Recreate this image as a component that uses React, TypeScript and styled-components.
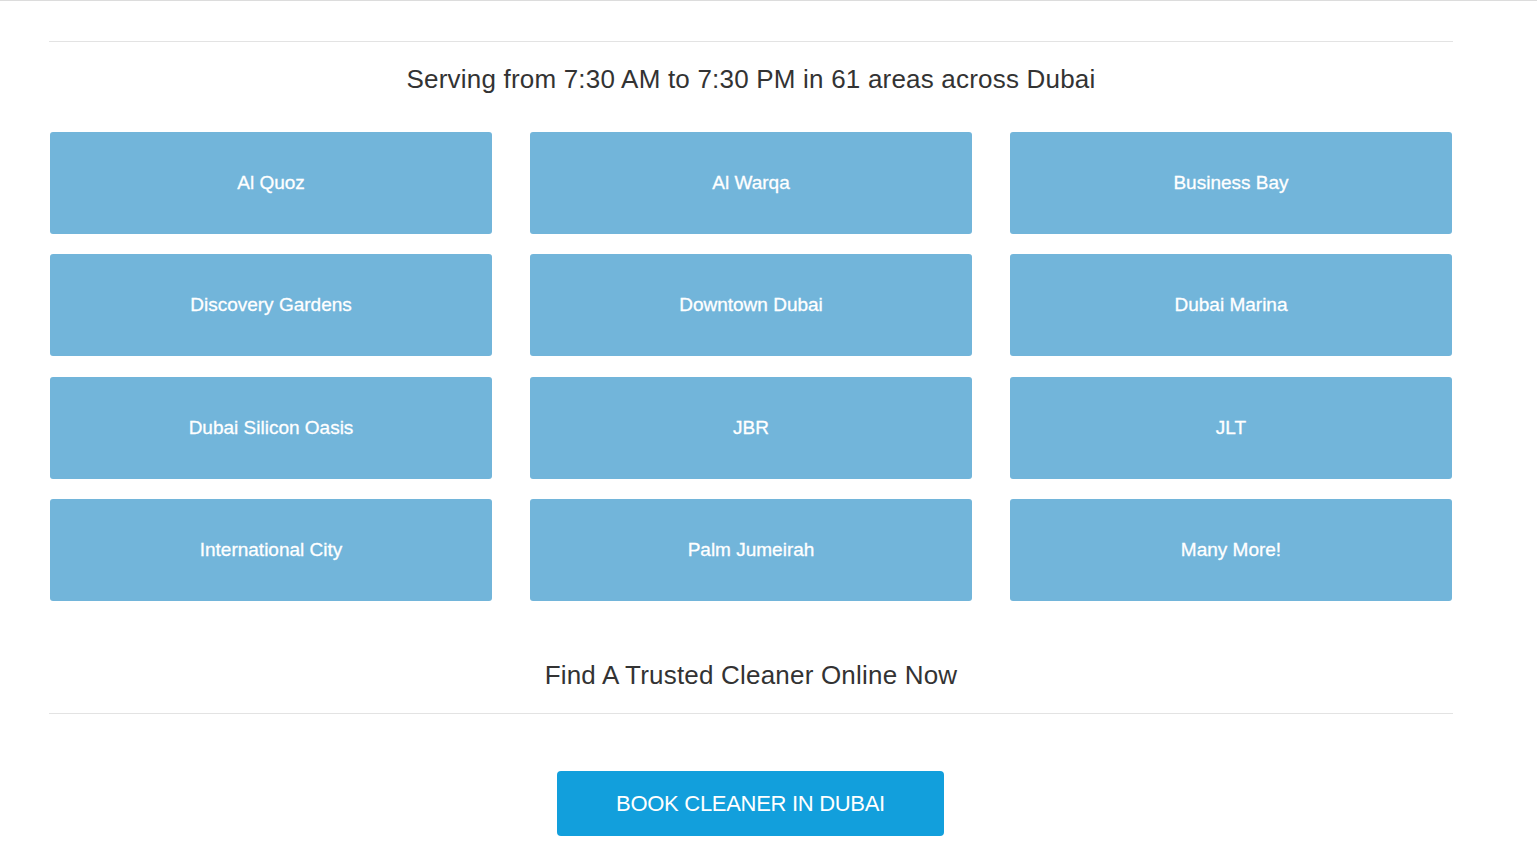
import React from "react";
import styled, { createGlobalStyle } from "styled-components";

const Global = createGlobalStyle`
  html, body { margin: 0; padding: 0; background: #fff; }
  body { font-family: "Liberation Sans", Arial, sans-serif; color: #333; }
`;

const Page = styled.div`
  border-top: 1px solid #dcdcdc;
  padding: 40px 0 0 49px;
`;

const Container = styled.div`
  width: 1404px;
  display: flex;
  flex-direction: column;
  align-items: stretch;
`;

const Rule = styled.hr`
  border: 0;
  border-top: 1px solid #e3e3e3;
  margin: 0;
`;

const Heading = styled.h2<{ $top: number; $bottom: number }>`
  margin: ${(p) => p.$top}px 0 ${(p) => p.$bottom}px;
  font-size: 26px;
  line-height: 30px;
  font-weight: normal;
  letter-spacing: 0.2px;
  text-align: center;
  color: #333;
`;

const Grid = styled.div`
  display: grid;
  grid-template-columns: repeat(3, 442px);
  grid-auto-rows: 102px;
  column-gap: 38px;
  row-gap: 20.3px;
  padding-left: 1px;
`;

const Area = styled.a`
  display: flex;
  align-items: center;
  justify-content: center;
  background: #72b5da;
  border-radius: 3px;
  color: #fff;
  font-size: 19px;
  text-decoration: none;
  -webkit-text-stroke: 0.3px #fff;
`;

const ButtonRow = styled.div`
  display: flex;
  justify-content: center;
  padding-top: 57px;
  padding-right: 1px;
`;

const Book = styled.button`
  width: 387px;
  height: 65px;
  border: 0;
  border-radius: 4px;
  background: #129fdc;
  color: #fff;
  font-family: "Liberation Sans", Arial, sans-serif;
  font-size: 22px;
  letter-spacing: -0.3px;
  padding-top: 2px;
  cursor: pointer;
`;

const areas = [
  "Al Quoz",
  "Al Warqa",
  "Business Bay",
  "Discovery Gardens",
  "Downtown Dubai",
  "Dubai Marina",
  "Dubai Silicon Oasis",
  "JBR",
  "JLT",
  "International City",
  "Palm Jumeirah",
  "Many More!",
];

export default function App() {
  return (
    <Page>
      <Global />
      <Container>
        <Rule />
        <Heading $top={22} $bottom={38}>
          Serving from 7:30 AM to 7:30 PM in 61 areas across Dubai
        </Heading>
        <Grid>
          {areas.map((a) => (
            <Area key={a} href="#">
              {a}
            </Area>
          ))}
        </Grid>
        <Heading $top={59} $bottom={23}>
          Find A Trusted Cleaner Online Now
        </Heading>
        <Rule />
        <ButtonRow>
          <Book>BOOK CLEANER IN DUBAI</Book>
        </ButtonRow>
      </Container>
    </Page>
  );
}
